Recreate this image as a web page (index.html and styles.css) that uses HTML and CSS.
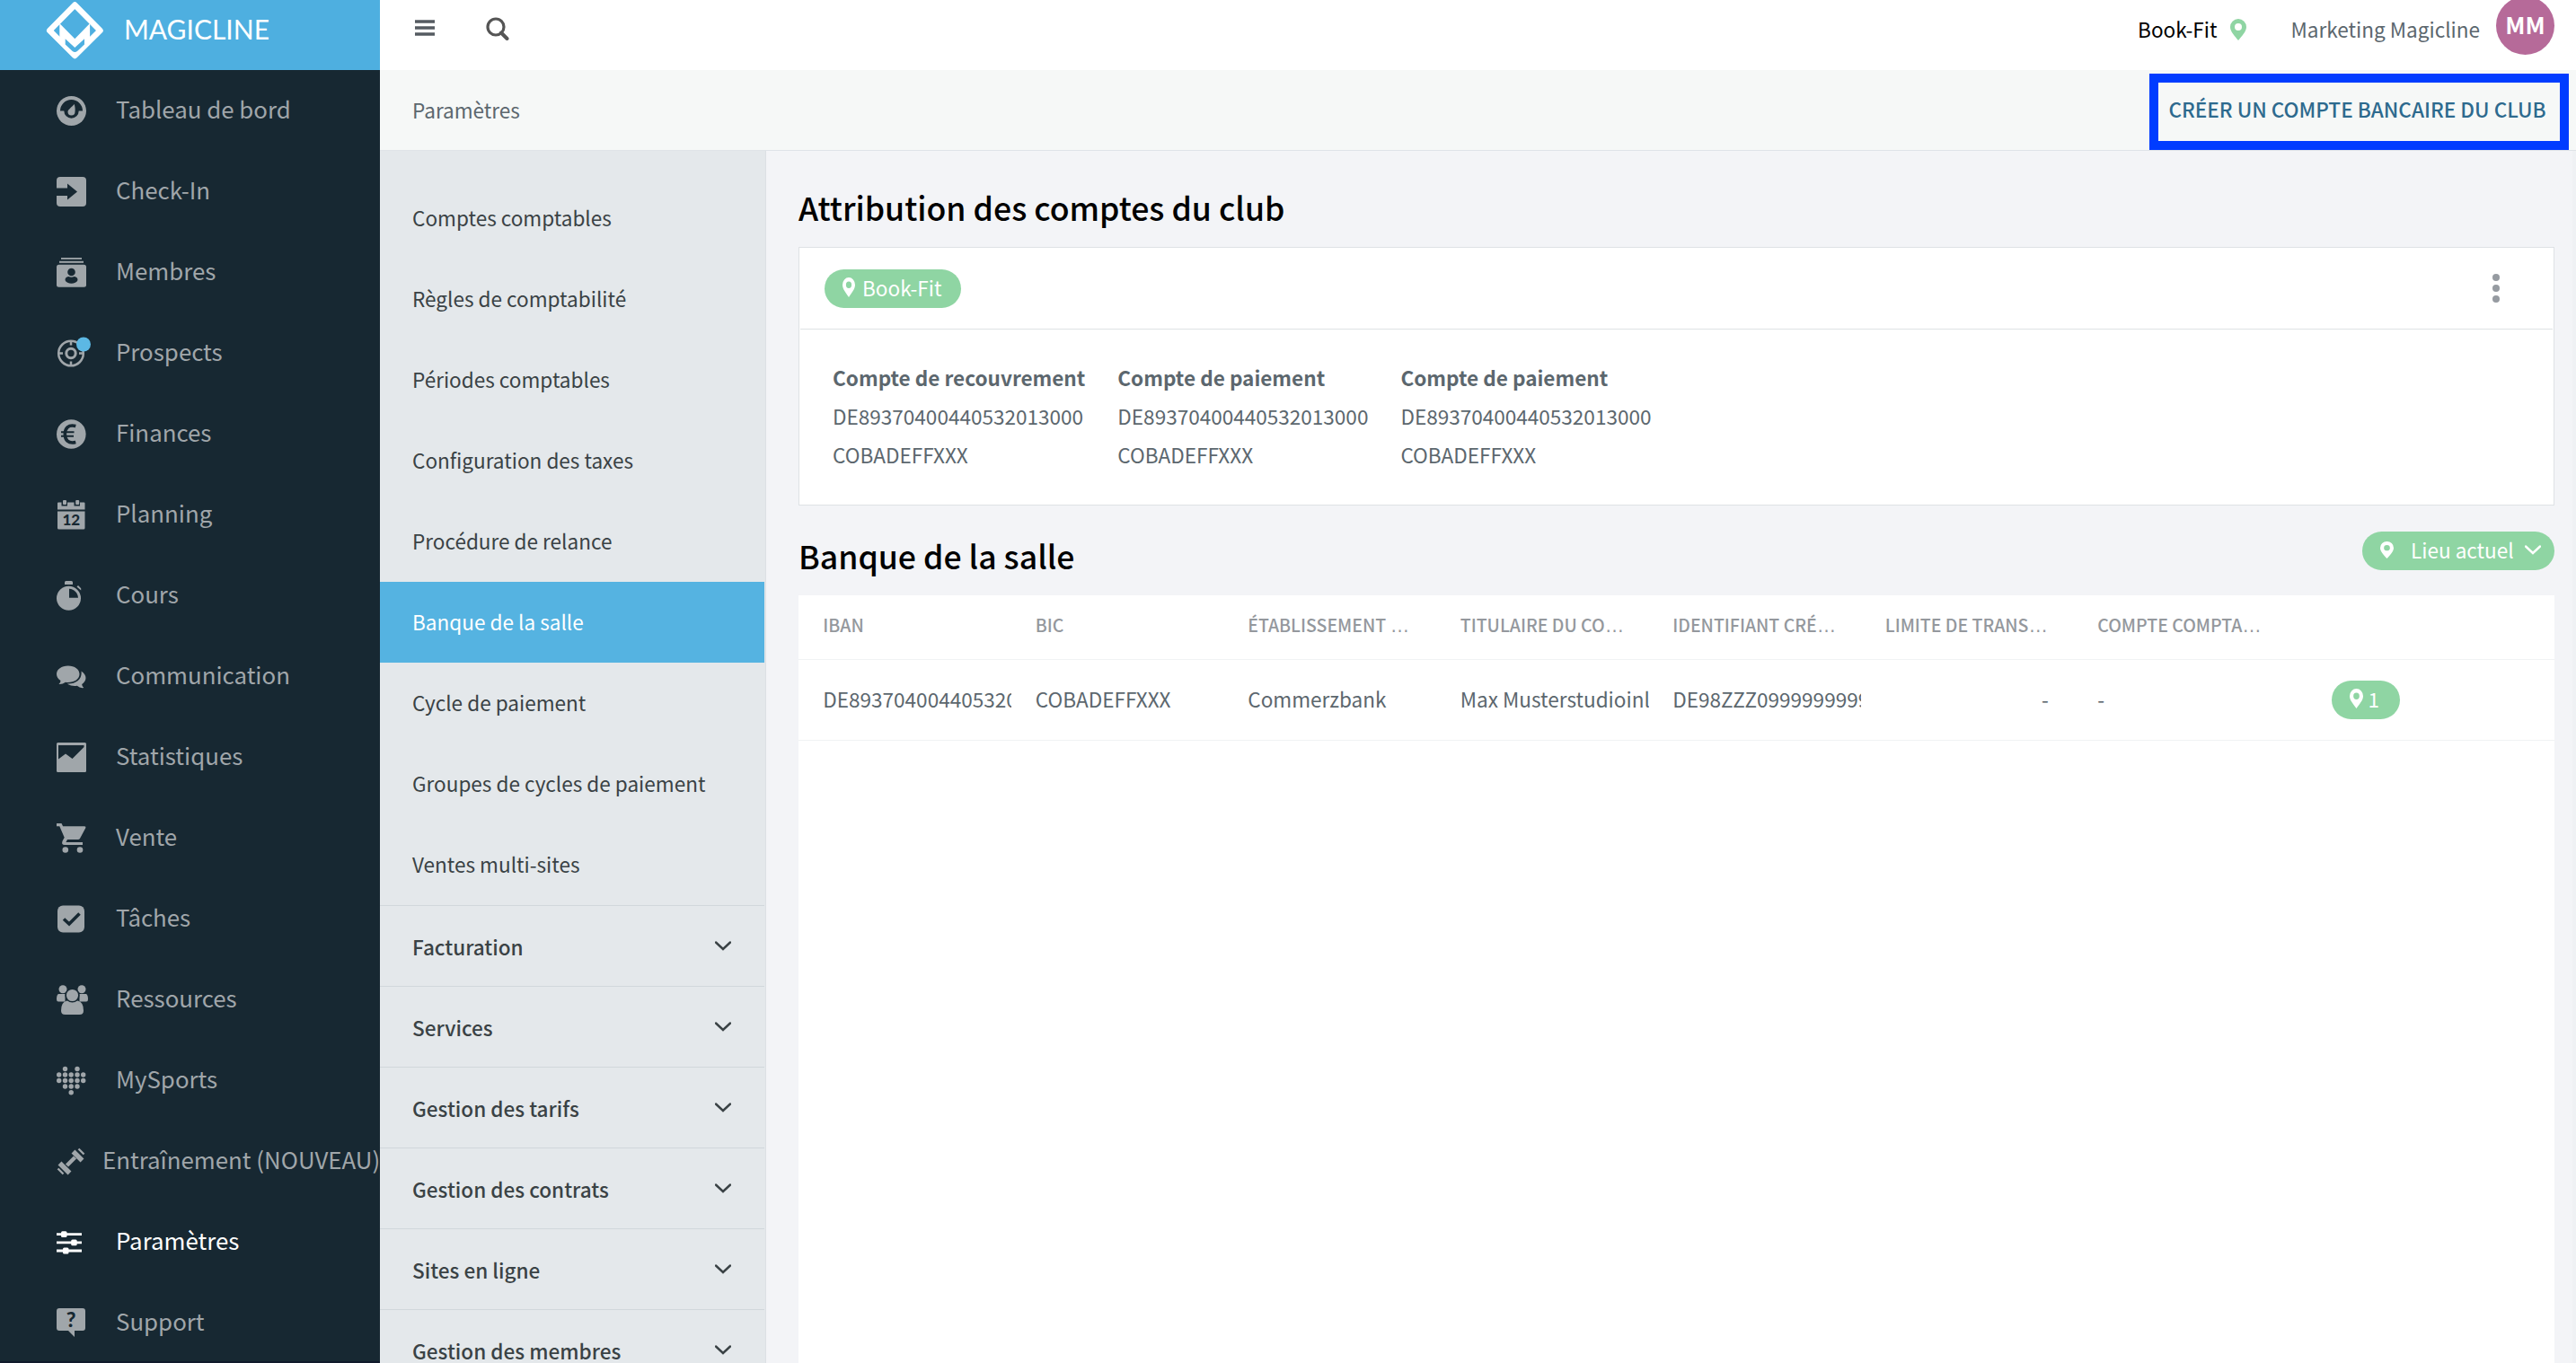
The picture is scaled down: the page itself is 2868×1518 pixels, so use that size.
FILE: index.html
```html
<!DOCTYPE html>
<html lang="fr">
<head>
    <meta charset="UTF-8">
    <meta name="viewport" content="width=device-width, initial-scale=1.0">
    <title>Magicline - Paramètres</title>
    <link rel="stylesheet" href="styles.css">
</head>
<body>
    <svg class="sprite">
        <symbol id="pin" viewBox="0 0 18 24">
            <path fill-rule="evenodd" d="M9 0a9 9 0 0 1 9 9c0 5-5 10-9 15C5 19 0 14 0 9a9 9 0 0 1 9-9zm0 5a4 4 0 1 0 0 8 4 4 0 0 0 0-8z"/>
        </symbol>
        <symbol id="chevron" viewBox="0 0 18 11">
            <path d="M1 1.5l8 7.5 8-7.5" fill="none" stroke="currentColor" stroke-width="2.4" stroke-linecap="round"/>
        </symbol>
    </svg>

    <div class="sidebar">
        <div class="logo">
            <svg width="64" height="66" viewBox="51 1 64 66">
                <path d="M83.3 5.5L111.5 34 83.3 62 55.2 34z" fill="none" stroke="#fff" stroke-width="6.5" stroke-linejoin="round"/>
                <path d="M66.3 26l17 17.200 16.800-17.200v20L83.300 61 66.300 46z" fill="#fff"/>
                <path d="M72.700 43.200l10.600 9.700 10.700-9.700v6.300l-8 7.500q-2.700 2-5.300 0l-8-7.500z" fill="#4eafe0"/>
            </svg>
            <svg width="170" height="36" viewBox="0 0 170 36">
                <text class="logo-text" x="0" y="25" textLength="162" lengthAdjust="spacingAndGlyphs">MAGICLINE</text>
            </svg>
        </div>
        <ul class="menu">
            <li>
                <svg viewBox="0 0 36 33"><circle cx="16.500" cy="16.500" r="16.500"/><path class="cut" d="M4 16.500a12.500 12.500 0 0 1 25 0h-4.300a8.200 8.200 0 0 1-16.400 0z"/><path d="M19.800 9c1 4 1 6 .7 8.500a4 4 0 0 1-8 0c.3-2.500 4-5 7.300-8.500z"/></svg>
                <span>Tableau de bord</span>
            </li>
            <li>
                <svg viewBox="0 0 36 33"><rect width="33" height="33" rx="4"/><path class="cut" d="M0 12.500h12V7.500l11 9-11 9v-4.500H0z"/></svg>
                <span>Check-In</span>
            </li>
            <li>
                <svg viewBox="0 0 36 33"><rect x="5" y="0" width="23" height="1.800"/><rect x="3" y="3.800" width="27" height="2"/><rect y="7.800" width="33" height="25" rx="2.500"/><circle class="cut" cx="16.500" cy="16" r="4.300"/><path class="cut" d="M9.500 25c0-3 2-4 4-4 2 1 4 1 6 0 2 0 4 1 4 4-2 5-12 5-14 0z"/></svg>
                <span>Membres</span>
            </li>
            <li>
                <svg viewBox="0 0 36 33"><g fill="none" stroke="currentColor" stroke-width="2.500"><circle cx="16" cy="16.500" r="13.800"/><circle cx="16" cy="16.500" r="5.200" stroke-width="3"/><path d="M16 2.500v5M16 25.500v5M2 16.500h5M25 16.500h5"/></g><circle class="dot" cx="30" cy="6.500" r="8"/></svg>
                <span>Prospects</span>
            </li>
            <li>
                <svg viewBox="0 0 36 33"><circle cx="16.300" cy="16.500" r="16.300"/><g class="line"><path d="M21.300 7.500c-8.500-2-12 2.500-12 9s3.500 11 12 9" stroke-width="3.600"/><path d="M5 14.300h14.500M5 18.800h14" stroke-width="2"/></g></svg>
                <span>Finances</span>
            </li>
            <li>
                <svg viewBox="0 0 36 33"><path d="M1 3.500q0-1 1-1h3.500v4h6.500v-4h7.500v4H26v-4h4.500q1 0 1 1v7H1zM1 12.500h30.500V31q0 1.500-1.500 1.500H2.500Q1 32.500 1 31z"/><rect x="7" y="0" width="4" height="5" rx="1"/><rect x="21.200" y="0" width="4" height="5" rx="1"/><text class="glyph" x="16.300" y="28" font-size="17">12</text></svg>
                <span>Planning</span>
            </li>
            <li>
                <svg viewBox="0 0 36 33"><path d="M9 4V1.500Q9 0 10.500 0h6Q18 0 18 1.500V4zM22.500 6.500l1.500-1.500 3.200 3.200v2.300z"/><circle cx="13.500" cy="19.300" r="13.500"/><path class="cut" d="M14 8.700c6 .5 9.500 4.500 10 10H14z"/></svg>
                <span>Cours</span>
            </li>
            <li>
                <svg viewBox="0 0 36 33"><path d="M27.500 10.500c7 4.500 6 11 .8 14.500q-.3 2 2 4-4 .8-7.500-2.300c-4 .5-8 0-11-2.200 10 .5 17-5.500 15.700-14z"/><path d="M12.800 4.500c7.500 0 12.700 4 12.700 9.300s-5.500 9.300-13 9.300q-1.500 0-2.500-.3-3.500 2.500-7.500 2.200 2-1.700 2-4C1.500 19 0 16.700 0 13.800 0 8.500 5.500 4.500 12.800 4.500z"/></svg>
                <span>Communication</span>
            </li>
            <li>
                <svg viewBox="0 0 36 33"><rect width="33" height="33" rx="1.500"/><path class="cut" d="M2 3h28.500v2L17.500 18 10 12.500 2 18.500z"/></svg>
                <span>Statistiques</span>
            </li>
            <li>
                <svg viewBox="0 0 36 33"><path d="M0 0h5.500l1.600 3.300H31q2 0 1.200 2l-6 11.200q-.8 1.500-2.500 1.500H12l-1.600 3H29v3H9q-4 0-2.500-4.300l2.200-4L3.300 3.300H0z"/><circle cx="9.800" cy="29.500" r="3.300"/><circle cx="26" cy="29.500" r="3.300"/></svg>
                <span>Vente</span>
            </li>
            <li>
                <svg viewBox="0 0 36 33"><rect x="1" y="1.500" width="30" height="30" rx="6"/><path class="line" d="M8 16.500l6 5.500 11.500-11.500" stroke-width="3.600"/></svg>
                <span>Tâches</span>
            </li>
            <li>
                <svg viewBox="0 0 36 33"><circle cx="7" cy="4.700" r="4.500"/><circle cx="28" cy="4.700" r="4.500"/><path d="M2 10h7.500v8.500H2q-2 0-2-2.500 0-5 2-6zM33 10h-7.500v8.500H33q2 0 2-2.500 0-5-2-6z"/><path d="M11.500 17.500h12q6.500 1.500 6.500 11 0 4.500-4.500 4.500h-16Q5 33 5 28.500 5 19 11.500 17.500z"/><circle class="ring" cx="17.500" cy="11.500" r="7.300"/></svg>
                <span>Ressources</span>
            </li>
            <li>
                <svg viewBox="0 0 36 33"><circle cx="9.500" cy="3.500" r="2.700"/><circle cx="23" cy="3.500" r="2.700"/><circle cx="2.700" cy="10" r="2.700"/><circle cx="9.500" cy="10" r="2.700"/><circle cx="16.200" cy="10" r="2.700"/><circle cx="23" cy="10" r="2.700"/><circle cx="29.700" cy="10" r="2.700"/><circle cx="2.700" cy="16.500" r="2.700"/><circle cx="9.500" cy="16.500" r="2.700"/><circle cx="16.200" cy="16.500" r="2.700"/><circle cx="23" cy="16.500" r="2.700"/><circle cx="29.700" cy="16.500" r="2.700"/><circle cx="9.500" cy="23" r="2.700"/><circle cx="16.200" cy="23" r="2.700"/><circle cx="23" cy="23" r="2.700"/><circle cx="16.200" cy="29.700" r="2.700"/></svg>
                <span>MySports</span>
            </li>
            <li class="wide">
                <svg viewBox="0 0 36 33"><g fill="none" stroke="currentColor"><path d="M11.500 21l9-9" stroke-width="4.500"/><path d="M18.500 5.500l10 10M3.500 18.500l11 11" stroke-width="5.500"/><path d="M24.500 2.500l6 6M1.500 24.500l6 6" stroke-width="2.400"/></g></svg>
                <span>Entraînement (NOUVEAU)</span>
            </li>
            <li class="active">
                <svg viewBox="0 0 36 33"><path d="M0 6.200h28v2.800H0zM0 15.400h28v2.800H0zM0 24.600h28v2.800H0z"/><rect x="5" y="4.200" width="6.500" height="6.800" rx="1.500"/><rect x="16.200" y="13.400" width="6.500" height="6.800" rx="1.500"/><rect x="7" y="22.600" width="6.500" height="6.800" rx="1.500"/></svg>
                <span>Paramètres</span>
            </li>
            <li>
                <svg viewBox="0 0 36 33"><path d="M3 0h26q3 0 3 3v19q0 3-3 3h-9v7l-7-7H3q-3 0-3-3V3q0-3 3-3z"/><text class="glyph" x="16" y="20.500" font-size="23">?</text></svg>
                <span>Support</span>
            </li>
        </ul>
    </div>

    <div class="page">
        <div class="topbar">
            <svg class="burger" width="22" height="18" viewBox="0 0 22 18"><path d="M0 2h22M0 9h22M0 16h22" stroke="#555b61" stroke-width="3.600"/></svg>
            <svg class="search" width="26" height="26" viewBox="0 0 26 26"><circle cx="11" cy="11" r="9" fill="none" stroke="#555" stroke-width="3.200"/><path d="M17 17.500l6.500 6.500" stroke="#555" stroke-width="4" stroke-linecap="round"/></svg>
            <span class="club">Book-Fit</span>
            <svg class="club-pin" width="18" height="24"><use href="#pin"/></svg>
            <span class="user">Marketing Magicline</span>
            <span class="avatar">MM</span>
        </div>
        <div class="toolbar">
            <span>Paramètres</span>
            <a class="create">CRÉER UN COMPTE BANCAIRE DU CLUB</a>
        </div>

        <div class="content">
            <ul class="submenu">
                <li>Comptes comptables</li>
                <li>Règles de comptabilité</li>
                <li>Périodes comptables</li>
                <li>Configuration des taxes</li>
                <li>Procédure de relance</li>
                <li class="selected">Banque de la salle</li>
                <li>Cycle de paiement</li>
                <li>Groupes de cycles de paiement</li>
                <li>Ventes multi-sites</li>
                <li class="group">Facturation <svg><use href="#chevron"/></svg></li>
                <li class="group">Services <svg><use href="#chevron"/></svg></li>
                <li class="group">Gestion des tarifs <svg><use href="#chevron"/></svg></li>
                <li class="group">Gestion des contrats <svg><use href="#chevron"/></svg></li>
                <li class="group">Sites en ligne <svg><use href="#chevron"/></svg></li>
                <li class="group">Gestion des membres <svg><use href="#chevron"/></svg></li>
            </ul>

            <div class="main">
                <h2>Attribution des comptes du club</h2>
                <div class="card">
                    <div class="card-header">
                        <span class="badge badge-club"><svg width="14" height="22" viewBox="0 0 18 24" preserveAspectRatio="none"><use href="#pin"/></svg>Book-Fit</span>
                        <svg class="more" width="8" height="32" viewBox="0 0 8 32"><circle cx="4" cy="4" r="4"/><circle cx="4" cy="16" r="4"/><circle cx="4" cy="28" r="4"/></svg>
                    </div>
                    <div class="accounts">
                        <div><b>Compte de recouvrement</b><br>DE89370400440532013000<br>COBADEFFXXX</div>
                        <div><b>Compte de paiement</b><br>DE89370400440532013000<br>COBADEFFXXX</div>
                        <div><b>Compte de paiement</b><br>DE89370400440532013000<br>COBADEFFXXX</div>
                    </div>
                </div>

                <div class="section-title">
                    <h2>Banque de la salle</h2>
                    <span class="badge badge-place"><svg width="15" height="19" viewBox="0 0 18 24" preserveAspectRatio="none"><use href="#pin"/></svg>Lieu actuel<svg class="arrow" width="18" height="11"><use href="#chevron"/></svg></span>
                </div>

                <div class="table">
                    <div class="row head">
                        <div>IBAN</div>
                        <div>BIC</div>
                        <div>ÉTABLISSEMENT <i>…</i></div>
                        <div>TITULAIRE DU CO<i>…</i></div>
                        <div>IDENTIFIANT CRÉ<i>…</i></div>
                        <div>LIMITE DE TRANS<i>…</i></div>
                        <div>COMPTE COMPTA<i>…</i></div>
                    </div>
                    <div class="row">
                        <div>DE893704004405320</div>
                        <div>COBADEFFXXX</div>
                        <div>Commerzbank</div>
                        <div>Max Musterstudioinl</div>
                        <div>DE98ZZZ0999999999</div>
                        <div class="number">-</div>
                        <div>-</div>
                        <span class="badge badge-count"><svg width="15" height="22" viewBox="0 0 18 24" preserveAspectRatio="none"><use href="#pin"/></svg>1</span>
                    </div>
                </div>
            </div>
        </div>
    </div>
</body>
</html>
```
FILE: styles.css
```css
* {
    box-sizing: border-box;
}
body {
    margin: 0;
    display: flex;
    height: 1518px;
    overflow: hidden;
    font-family: "Noto Sans CJK SC", sans-serif;
    font-size: 22.55px;
    color: #5c676e;
    background: #f3f4f7;
}
ul {
    list-style: none;
    margin: 0;
    padding: 0;
}
svg {
    display: block;
    flex: none;
    fill: currentColor;
}
.sprite {
    display: none;
}

/* left navigation */
.sidebar {
    width: 423px;
    flex: none;
    background: #172832;
    border-bottom: 2px solid #101a2b;
}
.logo {
    height: 78px;
    padding: 1px 0 0 51px;
    display: flex;
    background: #4eafe0;
}
.logo svg + svg {
    margin: 18px 0 0 23px;
}
.logo-text {
    font-family: Lato, sans-serif;
    font-size: 30.5px;
    fill: #fff;
}
.menu li {
    height: 90px;
    display: flex;
    align-items: center;
    padding-left: 63px;
    font-size: 25.85px;
    white-space: nowrap;
    color: #a0a6aa;
}
.menu svg {
    width: 36px;
    height: 33px;
    overflow: visible;
}
.menu span {
    margin-left: 30px;
    padding-bottom: 5px;
}
.menu .wide span {
    margin-left: 15px;
}
.menu .active {
    color: #fff;
}
.cut {
    fill: #172832;
}
.line {
    fill: none;
    stroke: #172832;
}
.ring {
    stroke: #172832;
    stroke-width: 1.5;
}
.dot {
    fill: #5cb8e4;
}
.glyph {
    font-family: Lato, sans-serif;
    font-weight: 900;
    text-anchor: middle;
    fill: #172832;
}

/* top bars */
.page {
    flex: 1;
    display: flex;
    flex-direction: column;
}
.topbar {
    height: 78px;
    padding: 0 24px 14px 39px;
    display: flex;
    align-items: center;
    background: #fff;
}
.burger {
    margin-bottom: 2px;
}
.search {
    margin-left: 57px;
}
.club {
    margin-left: auto;
    color: #000;
}
.club-pin {
    margin: 2px 50px 0 14px;
    color: #8fd5a3;
}
.avatar {
    width: 65px;
    height: 65px;
    margin: -7px 0 0 18px;
    padding-bottom: 4px;
    border-radius: 50%;
    background: #b66a99;
    color: #fff;
    font-size: 26px;
    font-weight: 700;
    line-height: 62px;
    text-align: center;
}
.toolbar {
    height: 90px;
    padding: 0 8px 0 36px;
    display: flex;
    align-items: center;
    justify-content: space-between;
    background: #f6f8f7;
    border-bottom: 1px solid #dfe3e8;
}
.toolbar span {
    padding-bottom: 2px;
}
.create {
    width: 467px;
    height: 85px;
    margin-top: 4px;
    padding-right: 4px;
    border: 10px solid #003cff;
    color: #2d6a8e;
    font-weight: 500;
    line-height: 59px;
    text-align: center;
    white-space: nowrap;
}

/* settings navigation */
.content {
    flex: 1;
    min-height: 0;
    display: flex;
}
.submenu {
    width: 430px;
    flex: none;
    padding-top: 30px;
    padding-right: 1px;
    background: #e4e8eb;
    border-right: 1px solid #dce0e4;
    color: #3a4245;
}
.submenu li {
    height: 90px;
    padding: 0 37px 3px 36px;
    display: flex;
    align-items: center;
    justify-content: space-between;
}
.submenu .selected {
    background: #55b3e1;
    color: #fff;
}
.submenu .group {
    padding-top: 1px;
    padding-bottom: 0;
    border-top: 1px solid #d1d7db;
    font-weight: 500;
}
.submenu svg {
    width: 18px;
    height: 11px;
    margin-bottom: 1px;
}

/* content */
.main {
    flex: 1;
    min-width: 0;
    padding: 0 24px 0 36px;
    display: flex;
    flex-direction: column;
    box-shadow: inset -4px 0 #eff1f4;
}
h2 {
    height: 107px;
    margin: 0;
    padding-top: 18px;
    font-size: 35.6px;
    font-weight: 500;
    line-height: 89px;
    color: #000;
}
.card {
    height: 288px;
    background: #fff;
    border: 1px solid #dee2e5;
}
.card-header {
    height: 91px;
    margin: 0 1px;
    padding: 0 59px 0 27px;
    display: flex;
    align-items: center;
    justify-content: space-between;
    border-bottom: 1px solid #dee2e5;
}
.more {
    color: #969ba1;
}
.accounts {
    display: flex;
    gap: 36px;
    padding: 32px 37px;
    line-height: 43px;
}
.badge {
    height: 43px;
    display: flex;
    align-items: center;
    padding-bottom: 2px;
    border-radius: 22px;
    background: #8fd5a3;
    color: #fff;
    line-height: 41px;
}
.badge-club {
    width: 152px;
    padding-left: 20px;
}
.badge-club svg {
    margin-right: 8px;
}
.badge-place {
    width: 214px;
    padding-left: 20px;
}
.badge-place svg {
    margin-right: 19px;
}
.badge-place .arrow {
    margin: 0 0 0 12px;
}
.badge-count {
    width: 76px;
    margin: 3px 0 0 37px;
    padding-left: 20px;
}
.badge-count svg {
    margin-right: 6px;
    margin-bottom: 2px;
}
.section-title {
    height: 100px;
    display: flex;
    align-items: center;
    justify-content: space-between;
}
.section-title h2 {
    height: 100px;
    padding-top: 11px;
}
.table {
    flex: 1;
    background: #fff;
}
.row {
    height: 90px;
    padding: 0 0 3px 14px;
    display: flex;
    align-items: center;
    border-bottom: 1px solid #f1f3f4;
}
.row div {
    width: 210px;
    margin: 0 13.25px;
    overflow: hidden;
    white-space: nowrap;
}
.head {
    height: 72px;
    padding-bottom: 6px;
    color: #94989d;
    font-size: 19.5px;
    font-weight: 500;
}
.head i {
    font-family: "Liberation Sans", sans-serif;
    font-size: 21.5px;
    font-style: normal;
    line-height: 1;
}
.row .number {
    padding-right: 28px;
    text-align: right;
}
```
